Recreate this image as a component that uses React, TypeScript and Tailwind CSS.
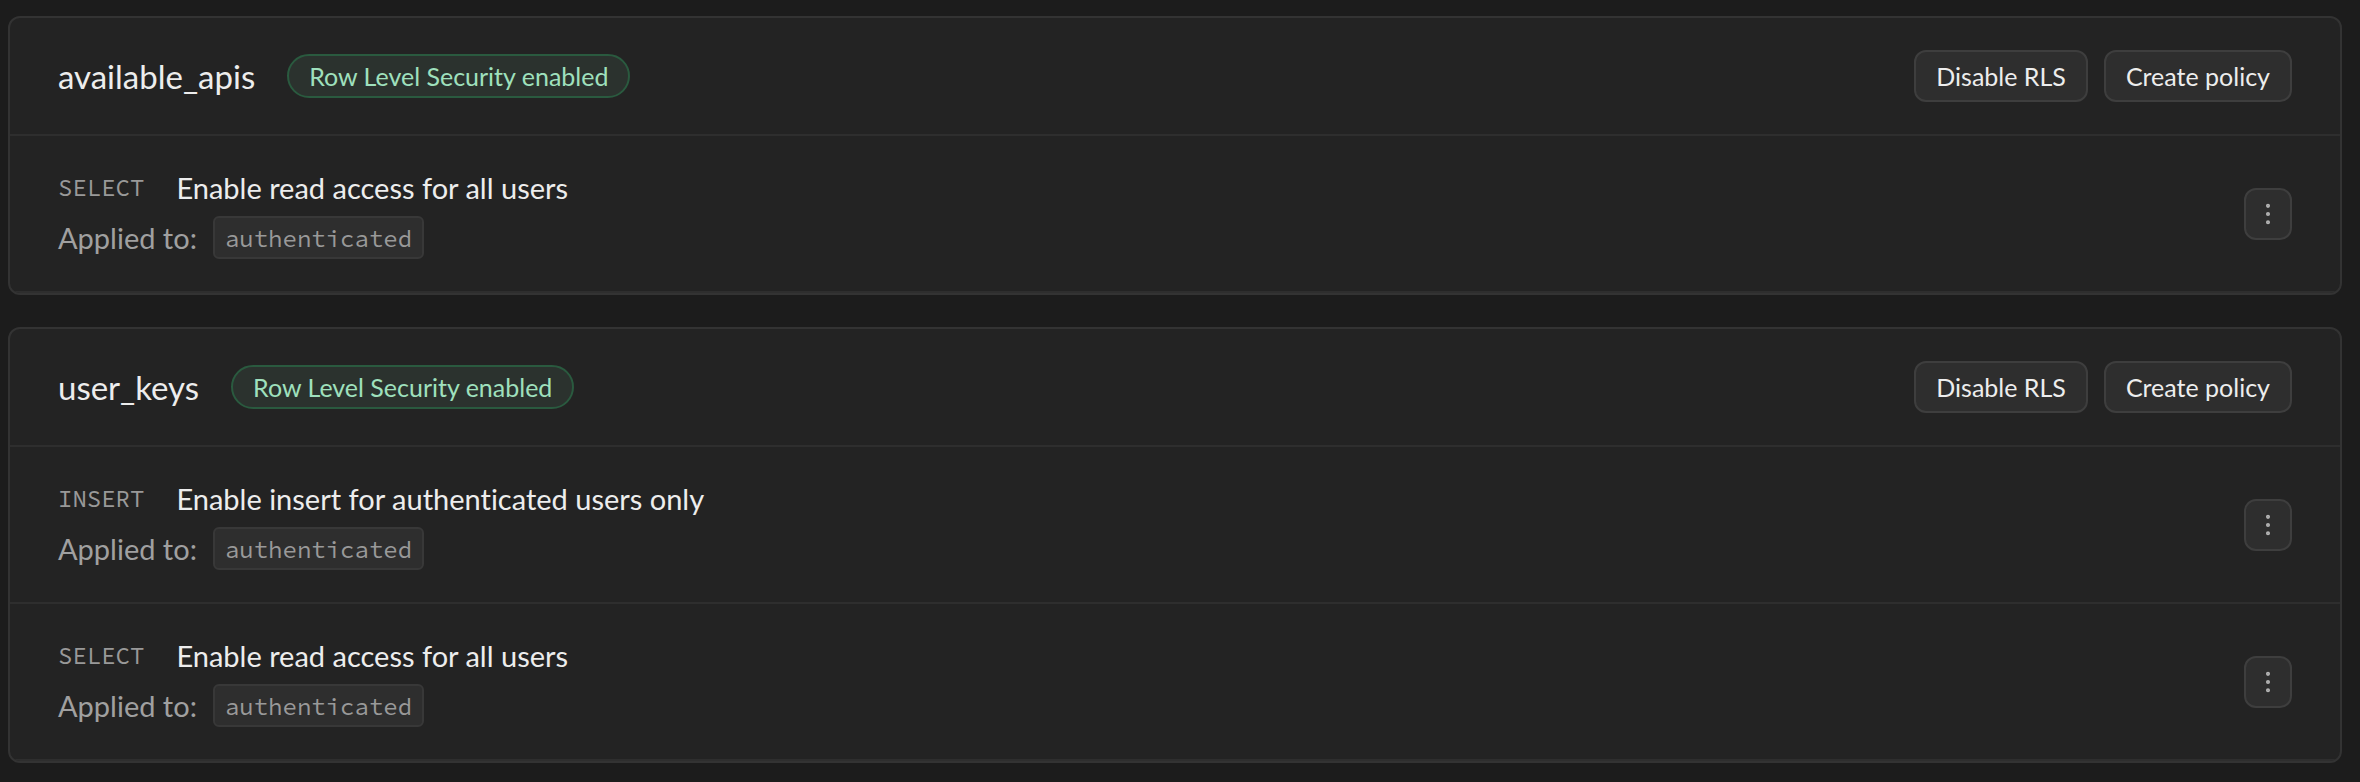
import { EllipsisVertical } from 'lucide-react'

type Policy = { command: string; name: string; roles: string[] }
type PolicyTable = { name: string; policies: Policy[] }

const tables: PolicyTable[] = [
  {
    name: 'available_apis',
    policies: [{ command: 'SELECT', name: 'Enable read access for all users', roles: ['authenticated'] }],
  },
  {
    name: 'user_keys',
    policies: [
      { command: 'INSERT', name: 'Enable insert for authenticated users only', roles: ['authenticated'] },
      { command: 'SELECT', name: 'Enable read access for all users', roles: ['authenticated'] },
    ],
  },
]

const buttonClass =
  'flex h-13 items-center justify-center rounded-xl border-2 border-[#3e3e3e] bg-[#2e2e2e] text-[25px] leading-8 text-[#ededed] hover:bg-[#363636]'
const monoClass = "font-['Source_Code_Pro','Liberation_Mono',monospace] text-2xl text-[#999999]"

function PolicyRow({ policy }: { policy: Policy }) {
  return (
    <li className="flex items-center justify-between border-b-2 border-[#2e2e2e] px-12 py-8">
      <div className="flex flex-col gap-2">
        <div className="flex items-center gap-8">
          <span className={monoClass}>{policy.command}</span>
          <h3 className="text-[29px] leading-10 text-[#ededed]">{policy.name}</h3>
        </div>
        <div className="flex items-center gap-4">
          <span className="text-[29px] leading-10 text-[#a0a0a0]">Applied to:</span>
          {policy.roles.map((role) => (
            <code
              key={role}
              className={`${monoClass} flex h-[43px] items-center rounded-md border-2 border-[#383838] bg-[#2e2e2e] px-2.5 pt-0.5`}
            >
              {role}
            </code>
          ))}
        </div>
      </div>
      <button type="button" aria-label="Policy actions" className={`${buttonClass} w-12`}>
        <EllipsisVertical size={28} strokeWidth={1.5} className="text-[#b4b4b4]" />
      </button>
    </li>
  )
}

function TableCard({ table }: { table: PolicyTable }) {
  return (
    <section className="overflow-hidden rounded-xl border-2 border-[#333333] bg-[#232323]">
      <header className="flex items-center justify-between border-b-2 border-[#2e2e2e] px-12 py-8">
        <div className="flex items-center gap-8">
          <h2 className="text-[33px] leading-10 text-[#ededed]">{table.name}</h2>
          <span className="flex h-11 items-center rounded-full border-2 border-[#2a5a3f] bg-[#2b322e] px-5 text-[25px] leading-8 text-[#9fe0bd]">
            Row Level Security enabled
          </span>
        </div>
        <div className="flex items-center gap-4">
          <button type="button" className={`${buttonClass} px-5`}>
            Disable RLS
          </button>
          <button type="button" className={`${buttonClass} px-5`}>
            Create policy
          </button>
        </div>
      </header>
      <ul>
        {table.policies.map((policy) => (
          <PolicyRow key={policy.name} policy={policy} />
        ))}
      </ul>
    </section>
  )
}

export default function App() {
  return (
    <main className="flex min-h-screen flex-col gap-8 bg-[#1c1c1c] py-4 pr-[18px] pl-2 font-['Lato','Liberation_Sans',sans-serif] [font-variant-ligatures:none]">
      {tables.map((table) => (
        <TableCard key={table.name} table={table} />
      ))}
    </main>
  )
}
